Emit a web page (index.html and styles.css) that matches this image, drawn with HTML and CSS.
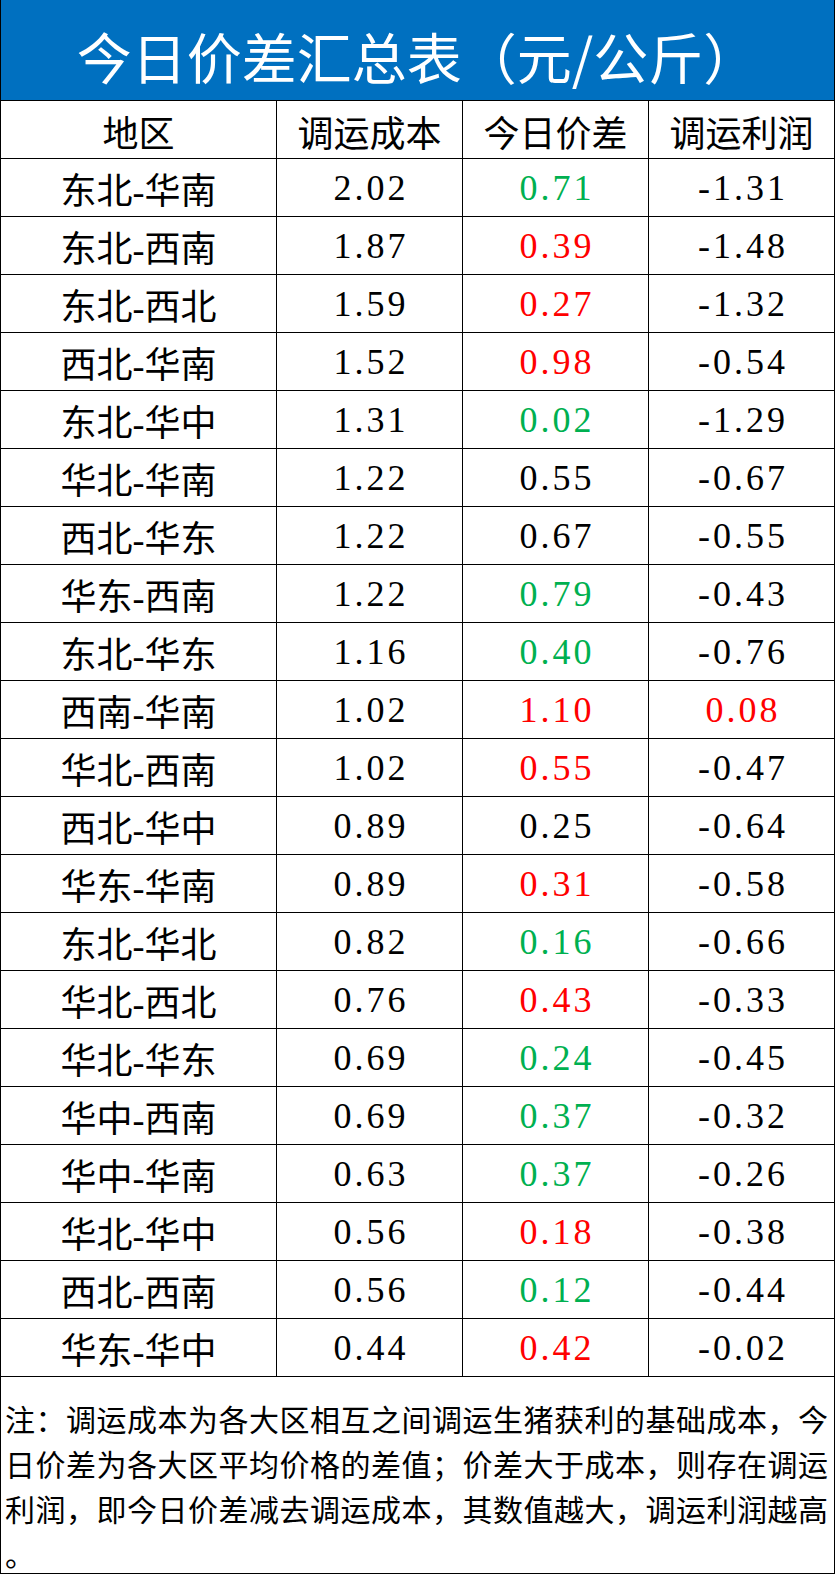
FILE: index.html
```html
<!DOCTYPE html>
<html lang="zh-CN">
<head>
<meta charset="utf-8">
<title>今日价差汇总表</title>
<link rel="stylesheet" href="styles.css">
</head>
<body>
<div class="sheet">
  <div class="title">今日价差汇总表（元/公斤）</div>
  <div class="row head">
    <div class="cell">地区</div>
    <div class="cell">调运成本</div>
    <div class="cell">今日价差</div>
    <div class="cell">调运利润</div>
  </div>
  <div class="row"><div class="cell">东北-华南</div><div class="cell num">2.02</div><div class="cell num g">0.71</div><div class="cell num">-1.31</div></div>
  <div class="row"><div class="cell">东北-西南</div><div class="cell num">1.87</div><div class="cell num r">0.39</div><div class="cell num">-1.48</div></div>
  <div class="row"><div class="cell">东北-西北</div><div class="cell num">1.59</div><div class="cell num r">0.27</div><div class="cell num">-1.32</div></div>
  <div class="row"><div class="cell">西北-华南</div><div class="cell num">1.52</div><div class="cell num r">0.98</div><div class="cell num">-0.54</div></div>
  <div class="row"><div class="cell">东北-华中</div><div class="cell num">1.31</div><div class="cell num g">0.02</div><div class="cell num">-1.29</div></div>
  <div class="row"><div class="cell">华北-华南</div><div class="cell num">1.22</div><div class="cell num">0.55</div><div class="cell num">-0.67</div></div>
  <div class="row"><div class="cell">西北-华东</div><div class="cell num">1.22</div><div class="cell num">0.67</div><div class="cell num">-0.55</div></div>
  <div class="row"><div class="cell">华东-西南</div><div class="cell num">1.22</div><div class="cell num g">0.79</div><div class="cell num">-0.43</div></div>
  <div class="row"><div class="cell">东北-华东</div><div class="cell num">1.16</div><div class="cell num g">0.40</div><div class="cell num">-0.76</div></div>
  <div class="row"><div class="cell">西南-华南</div><div class="cell num">1.02</div><div class="cell num r">1.10</div><div class="cell num r">0.08</div></div>
  <div class="row"><div class="cell">华北-西南</div><div class="cell num">1.02</div><div class="cell num r">0.55</div><div class="cell num">-0.47</div></div>
  <div class="row"><div class="cell">西北-华中</div><div class="cell num">0.89</div><div class="cell num">0.25</div><div class="cell num">-0.64</div></div>
  <div class="row"><div class="cell">华东-华南</div><div class="cell num">0.89</div><div class="cell num r">0.31</div><div class="cell num">-0.58</div></div>
  <div class="row"><div class="cell">东北-华北</div><div class="cell num">0.82</div><div class="cell num g">0.16</div><div class="cell num">-0.66</div></div>
  <div class="row"><div class="cell">华北-西北</div><div class="cell num">0.76</div><div class="cell num r">0.43</div><div class="cell num">-0.33</div></div>
  <div class="row"><div class="cell">华北-华东</div><div class="cell num">0.69</div><div class="cell num g">0.24</div><div class="cell num">-0.45</div></div>
  <div class="row"><div class="cell">华中-西南</div><div class="cell num">0.69</div><div class="cell num g">0.37</div><div class="cell num">-0.32</div></div>
  <div class="row"><div class="cell">华中-华南</div><div class="cell num">0.63</div><div class="cell num g">0.37</div><div class="cell num">-0.26</div></div>
  <div class="row"><div class="cell">华北-华中</div><div class="cell num">0.56</div><div class="cell num r">0.18</div><div class="cell num">-0.38</div></div>
  <div class="row"><div class="cell">西北-西南</div><div class="cell num">0.56</div><div class="cell num g">0.12</div><div class="cell num">-0.44</div></div>
  <div class="row"><div class="cell">华东-华中</div><div class="cell num">0.44</div><div class="cell num r">0.42</div><div class="cell num">-0.02</div></div>
  <div class="note">注：调运成本为各大区相互之间调运生猪获利的基础成本，今日价差为各大区平均价格的差值；价差大于成本，则存在调运利润，即今日价差减去调运成本，其数值越大，调运利润越高。</div>
</div>
</body>
</html>
```

FILE: styles.css
```css
html, body {
  margin: 0;
  padding: 0;
  background: #ffffff;
}

body {
  font-family: "Liberation Serif", "Noto Sans CJK SC", serif;
  color: #000000;
}

.sheet {
  width: 835px;
  box-sizing: border-box;
  border-left: 1px solid #000;
  border-right: 1px solid #000;
  border-bottom: 1px solid #000;
}

.title {
  height: 101px;
  box-sizing: border-box;
  border-bottom: 1px solid #000;
  background: #0070c0;
  color: #ffffff;
  font-family: "Noto Sans CJK SC", sans-serif;
  font-size: 55px;
  line-height: 100px;
  padding-top: 5px;
  text-align: center;
  white-space: nowrap;
}

.row {
  display: grid;
  grid-template-columns: 276px 186px 186px 185px;
  height: 58px;
  box-sizing: border-box;
  border-bottom: 1px solid #000;
}

.cell {
  display: flex;
  align-items: center;
  justify-content: center;
  border-right: 1px solid #000;
  font-size: 36px;
  white-space: nowrap;
}

.cell:last-child {
  border-right: none;
}

.num {
  letter-spacing: 3px;
  padding-left: 3px;
}

.head .cell {
  font-family: "Noto Sans CJK SC", sans-serif;
  padding-top: 3px;
}

.g {
  color: #00b050;
}

.r {
  color: #ff0000;
}

.note {
  height: 196px;
  box-sizing: border-box;
  padding: 19px 0 0 4px;
  font-family: "Noto Sans CJK SC", sans-serif;
  font-size: 30px;
  letter-spacing: 0.5px;
  line-height: 45px;
  line-break: anywhere;
  word-break: break-all;
}
```
